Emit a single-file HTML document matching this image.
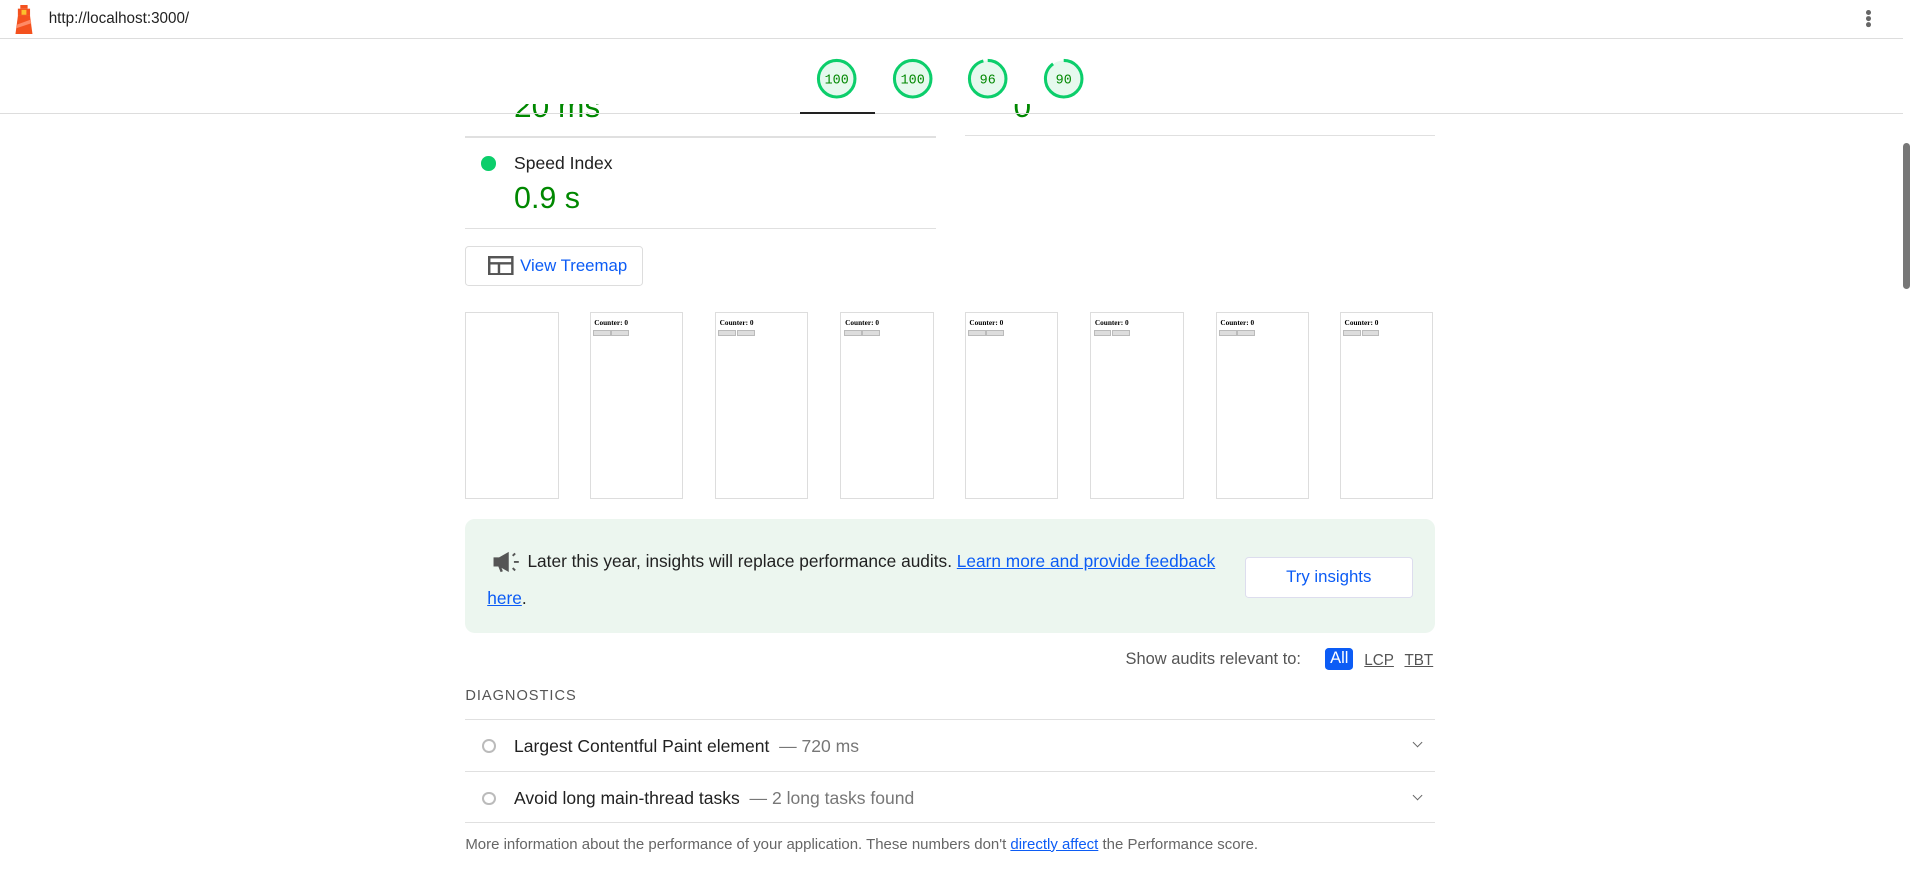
<!DOCTYPE html>
<html><head><meta charset="utf-8"><style>
html{zoom:1.21811}
body{margin:0;width:1568px;height:733px;overflow:hidden;background:#fff;font-family:"Liberation Sans",sans-serif;position:relative;color:#212121}
.a{position:absolute}
.line{position:absolute;height:1px;background:#e0e0e0}
.g{position:absolute;top:48px;width:34px;height:34px}
.g text{font-family:"Liberation Mono",monospace;font-size:11px;fill:#080}
.frame{position:absolute;top:256px;width:75px;height:152px;border:1px solid #ddd;background:#fff}
.frame b{position:absolute;left:3px;top:4px;font-family:"Liberation Serif",serif;font-size:6px;color:#000}
.frame i{position:absolute;top:14px;width:13px;height:3px;background:#ddd;border:1px solid #bbb}
a{color:#0c5cf5}
.row{position:absolute;left:382px;width:796px;font-size:14.4px}
.circ{position:absolute;left:14px;width:8px;height:8px;border:2px solid #bbb;border-radius:50%}
.chev{position:absolute;right:11px;width:5px;height:5px;border-right:1.5px solid #666;border-bottom:1.5px solid #666;transform:rotate(45deg)}
</style></head><body>
<svg class="a" style="left:11px;top:4px" width="18" height="24" viewBox="0 0 18 24"><rect x="6" y="0" width="6" height="3" fill="#f4511e"/><rect x="4" y="3" width="10" height="6" fill="#f4511e"/><rect x="7" y="4" width="4" height="4" fill="#fbc02d"/><polygon points="4,9 14,9 16,24 2,24" fill="#f4511e"/><polygon points="3.5,16 14.5,12 15,15 3,19" fill="#ff8a65"/></svg>
<div class="a" style="left:40px;top:8px;font-size:12.5px;color:#222">http://localhost:3000/</div>
<div class="a" style="left:1532px;top:8px;width:4px;height:4px;border-radius:50%;background:#666;box-shadow:0 5px 0 #666,0 10px 0 #666"></div>
<div class="line" style="left:0;top:31px;width:1562px;background:#ddd"></div>
<div class="a" style="left:1562px;top:117px;width:6px;height:120px;background:#777;border-radius:3px"></div>
<div class="a" style="left:422px;top:72px;font-size:26px;color:#080">20 ms</div>
<div class="a" style="left:832px;top:72px;font-size:26px;color:#080">0</div>
<div class="a" style="left:0;top:32px;width:1562px;height:53px;background:#fff"></div>
<div class="line" style="left:0;top:93px;width:1562px;background:#ddd"></div>
<div class="a" style="left:657px;top:92px;width:61px;height:2px;background:#222"></div>
<svg class="g" style="left:670px" viewBox="0 0 34 34"><circle cx="17" cy="17" r="15" fill="#e6f9ee" stroke="#0cce6b" stroke-width="2.5"/><text x="17" y="21" text-anchor="middle">100</text></svg>
<svg class="g" style="left:732px" viewBox="0 0 34 34"><circle cx="17" cy="17" r="15" fill="#e6f9ee" stroke="#0cce6b" stroke-width="2.5"/><text x="17" y="21" text-anchor="middle">100</text></svg>
<svg class="g" style="left:794px" viewBox="0 0 34 34"><circle cx="17" cy="17" r="15" fill="#e6f9ee"/><circle cx="17" cy="17" r="15" fill="none" stroke="#0cce6b" stroke-width="2.5" stroke-dasharray="90.5 94.2" transform="rotate(-90 17 17)"/><text x="17" y="21" text-anchor="middle">96</text></svg>
<svg class="g" style="left:856px" viewBox="0 0 34 34"><circle cx="17" cy="17" r="15" fill="#e6f9ee"/><circle cx="17" cy="17" r="15" fill="none" stroke="#0cce6b" stroke-width="2.5" stroke-dasharray="84.8 94.2" transform="rotate(-90 17 17)"/><text x="17" y="21" text-anchor="middle">90</text></svg>
<div class="line" style="left:382px;top:112px;width:386px"></div>
<div class="line" style="left:792px;top:111px;width:386px"></div>
<div class="a" style="left:395px;top:128px;width:12px;height:12px;border-radius:50%;background:#0cce6b"></div>
<div class="a" style="left:422px;top:126px;font-size:14.4px;color:#212121">Speed Index</div>
<div class="a" style="left:422px;top:149px;font-size:25px;color:#080">0.9 s</div>
<div class="line" style="left:382px;top:187px;width:386px"></div>
<div class="a" style="left:382px;top:202px;width:144px;height:31px;border:1px solid #ddd;border-radius:3px"></div>
<svg class="a" style="left:401px;top:210px" width="21" height="16" viewBox="0 0 21 16"><rect x="1" y="1" width="19" height="14" fill="none" stroke="#555" stroke-width="2"/><line x1="1" y1="6" x2="20" y2="6" stroke="#555" stroke-width="2"/><line x1="9" y1="6" x2="9" y2="15" stroke="#555" stroke-width="2"/></svg>
<div class="a" style="left:427px;top:210px;font-size:13.8px;color:#0c5cf5">View Treemap</div>
<div class="frame" style="left:382px"></div>
<div class="frame" style="left:484px"><b>Counter: 0</b><i style="left:2px"></i><i style="left:17px"></i></div>
<div class="frame" style="left:587px"><b>Counter: 0</b><i style="left:2px"></i><i style="left:17px"></i></div>
<div class="frame" style="left:690px"><b>Counter: 0</b><i style="left:2px"></i><i style="left:17px"></i></div>
<div class="frame" style="left:792px"><b>Counter: 0</b><i style="left:2px"></i><i style="left:17px"></i></div>
<div class="frame" style="left:895px"><b>Counter: 0</b><i style="left:2px"></i><i style="left:17px"></i></div>
<div class="frame" style="left:998px"><b>Counter: 0</b><i style="left:2px"></i><i style="left:17px"></i></div>
<div class="frame" style="left:1100px"><b>Counter: 0</b><i style="left:2px"></i><i style="left:17px"></i></div>
<div class="a" style="left:382px;top:426px;width:796px;height:94px;background:#ecf6ef;border-radius:8px"></div>
<svg class="a" style="left:404px;top:452px" width="24" height="18" viewBox="0 0 24 18"><path d="M2 6h4l7-4v14l-7-4H2z" fill="#555" stroke="#555" stroke-width="1.5"/><path d="M6 12l2 5" stroke="#555" stroke-width="2"/><path d="M17 4l2-2M18 9h4M17 14l2 2" stroke="#555" stroke-width="1.6"/></svg>
<div class="a" style="left:433px;top:452px;font-size:14.2px;color:#212121;white-space:nowrap">Later this year, insights will replace performance audits. <a href="#">Learn more and provide feedback</a></div>
<div class="a" style="left:400px;top:483px;font-size:14.2px;color:#212121"><a href="#">here</a>.</div>
<div class="a" style="left:1022px;top:457px;width:136px;height:32px;background:#fff;border:1px solid #dde;border-radius:3px;font-size:13.8px;color:#0c5cf5;text-align:center;line-height:32px">Try insights</div>
<div class="a" style="left:924px;top:534px;font-size:13.5px;color:#555">Show audits relevant to:</div>
<div class="a" style="left:1088px;top:532px;width:23px;height:18px;background:#0c5cf5;border-radius:3px;color:#fff;font-size:13.5px;text-align:center;line-height:18px">All</div>
<div class="a" style="left:1120px;top:535px;font-size:12.5px;color:#555;text-decoration:underline">LCP</div>
<div class="a" style="left:1153px;top:535px;font-size:12.5px;color:#555;text-decoration:underline">TBT</div>
<div class="a" style="left:382px;top:565px;font-size:12px;color:#555;letter-spacing:.8px">DIAGNOSTICS</div>
<div class="line" style="left:382px;top:590px;width:796px"></div>
<div class="row" style="top:604px"><div class="circ" style="top:3px"></div><span style="position:absolute;left:40px">Largest Contentful Paint element <span style="color:#777">&nbsp;— 720 ms</span></span><div class="chev" style="top:3px"></div></div>
<div class="line" style="left:382px;top:633px;width:796px"></div>
<div class="row" style="top:647px"><div class="circ" style="top:3px"></div><span style="position:absolute;left:40px">Avoid long main-thread tasks <span style="color:#777">&nbsp;— 2 long tasks found</span></span><div class="chev" style="top:3px"></div></div>
<div class="line" style="left:382px;top:675px;width:796px"></div>
<div class="a" style="left:382px;top:686px;font-size:12.3px;color:#666">More information about the performance of your application. These numbers don't <a href="#">directly affect</a> the Performance score.</div>
</body></html>
